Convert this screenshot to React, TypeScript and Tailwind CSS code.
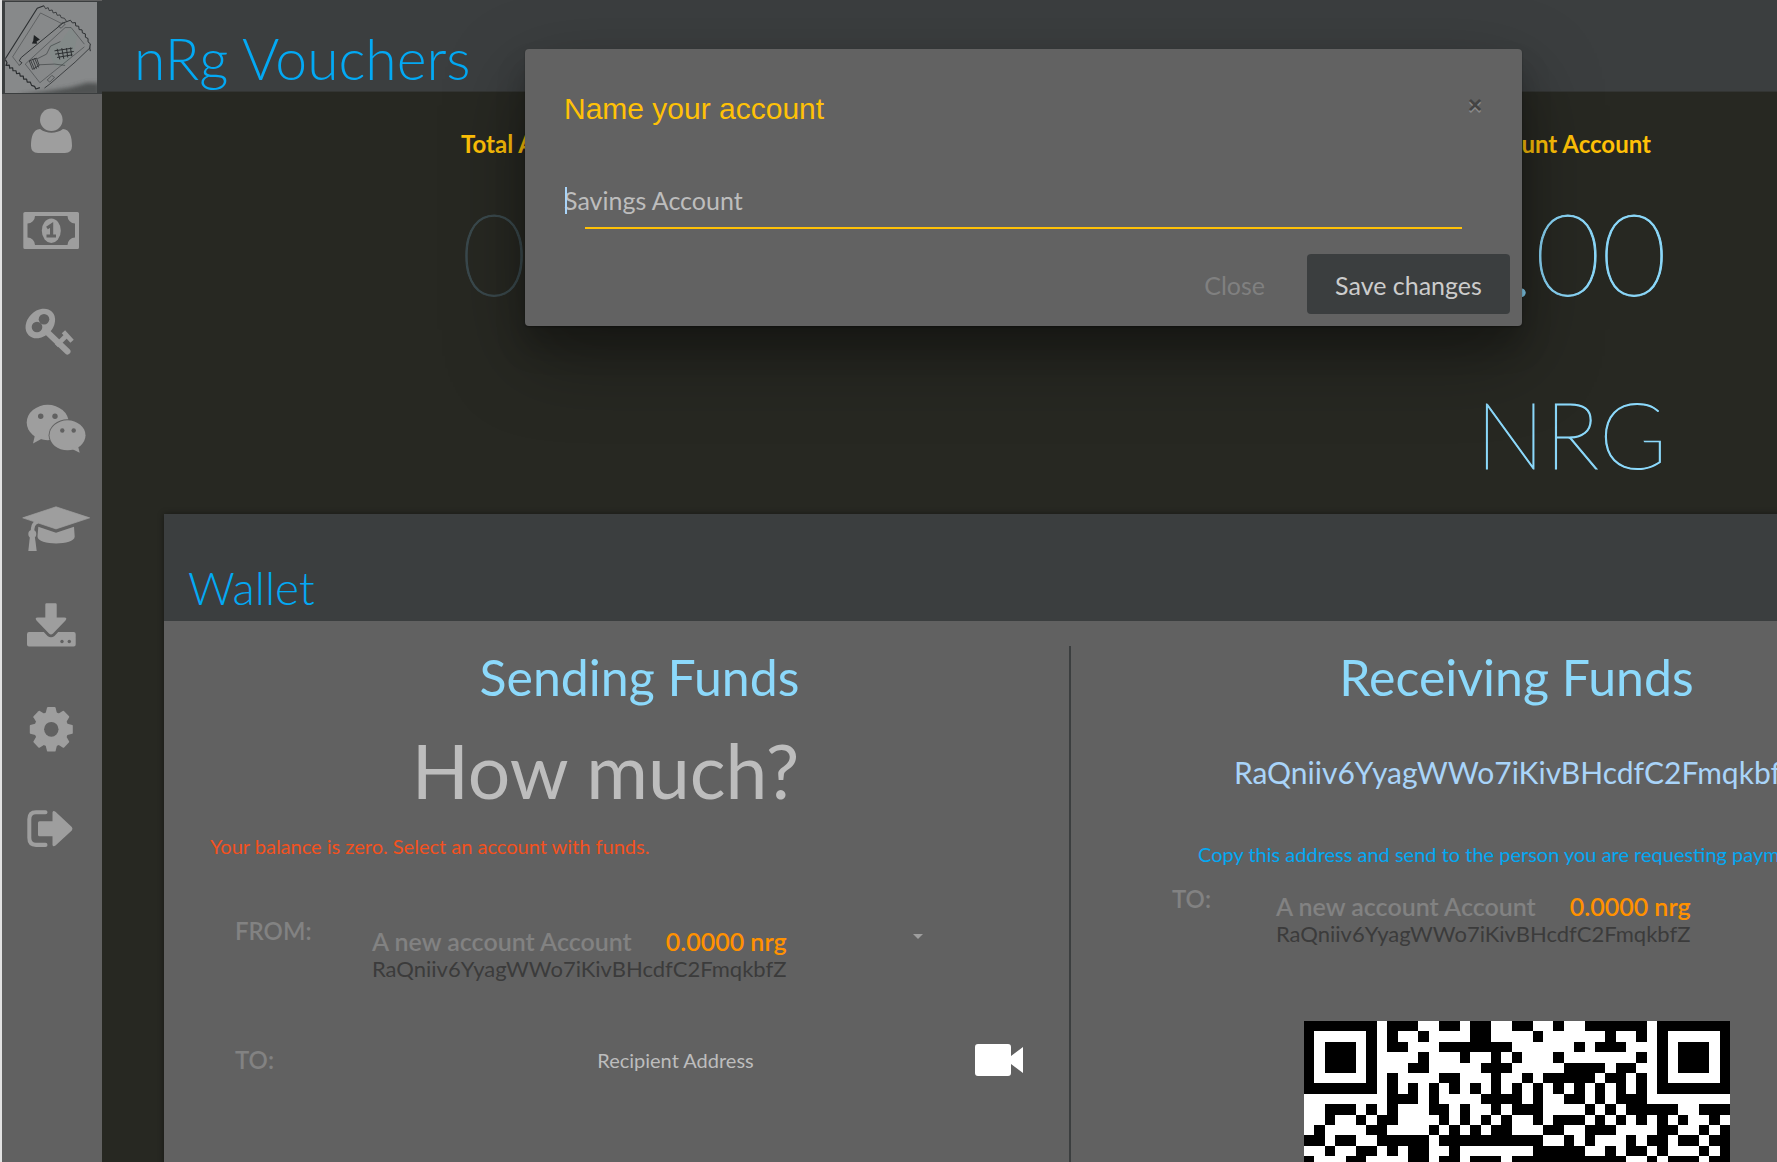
import React from "react";

const ADDRESS = "RaQniiv6YyagWWo7iKivBHcdfC2FmqkbfZ";

const FINDER_FULL = "#######";
const FINDER_RING = "#.....#";
const FINDER_CORE = "#.###.#";

/* Dark spans [start, end) between the two finder patterns or across the row. */
const QR_ROWS: { finder?: string; dark: [number, number][] }[] = [
  { finder: FINDER_FULL, dark: [[8, 11], [13, 15], [16, 18], [20, 22], [24, 25], [27, 33]] },
  { finder: FINDER_RING, dark: [[8, 9], [11, 12], [16, 18], [22, 23], [29, 30], [32, 33]] },
  { finder: FINDER_CORE, dark: [[8, 10], [13, 20], [26, 27], [28, 31]] },
  { finder: FINDER_CORE, dark: [[11, 12], [15, 16], [18, 19], [20, 21], [24, 25], [32, 33]] },
  { finder: FINDER_CORE, dark: [[10, 12], [17, 20], [25, 29], [30, 32]] },
  { finder: FINDER_RING, dark: [[8, 9], [13, 15], [18, 19], [21, 22], [23, 28], [29, 31], [32, 33]] },
  { finder: FINDER_FULL, dark: [[8, 9], [10, 11], [12, 13], [14, 15], [16, 17], [18, 19], [20, 21], [22, 23], [24, 25], [26, 27], [28, 29], [30, 31], [32, 33]] },
  { dark: [[8, 11], [12, 13], [17, 21], [22, 23], [25, 27], [28, 29], [30, 33]] },
  { dark: [[2, 5], [6, 7], [8, 9], [12, 14], [15, 16], [18, 19], [20, 23], [27, 28], [29, 30], [31, 36], [38, 41]] },
  { dark: [[2, 3], [5, 6], [7, 9], [13, 14], [15, 16], [17, 18], [19, 20], [22, 23], [24, 27], [28, 29], [30, 31], [32, 33], [34, 35], [36, 37], [39, 40]] },
  { dark: [[1, 2], [6, 8], [12, 13], [14, 15], [16, 17], [18, 20], [23, 25], [27, 30], [34, 36], [38, 39], [40, 41]] },
  { dark: [[0, 2], [3, 5], [7, 12], [13, 23], [25, 26], [27, 28], [31, 32], [33, 35], [36, 38], [39, 41]] },
  { dark: [[2, 3], [5, 7], [8, 9], [10, 12], [14, 15], [22, 27], [29, 30], [31, 33], [34, 35], [38, 39], [40, 41]] },
  { dark: [[0, 1], [4, 6], [10, 12], [13, 15], [16, 19], [20, 31], [33, 34], [35, 38], [39, 41]] },
];

function QrCode() {
  const cells: React.ReactElement[] = [];
  const put = (x: number, y: number, w: number) =>
    cells.push(<rect key={`${x}-${y}`} x={x} y={y} width={w} height={1} />);
  QR_ROWS.forEach((row, y) => {
    row.dark.forEach(([a, b]) => put(a, y, b - a));
    if (row.finder) {
      [...row.finder].forEach((c, i) => {
        if (c === "#") {
          put(i, y, 1);
          put(34 + i, y, 1);
        }
      });
    }
  });
  return (
    <svg viewBox="0 0 41 14" shapeRendering="crispEdges" className="block w-[426px] bg-white" role="img" aria-label="Address QR code">
      {cells}
    </svg>
  );
}

function Logo() {
  return (
    <svg viewBox="15 6 277 272" className="block h-[91px] w-[92px] bg-[#87898a]" aria-hidden="true">
      <defs>
        <filter id="smudge" x="-20%" y="-50%" width="140%" height="200%">
          <feGaussianBlur stdDeviation="7" />
        </filter>
      </defs>
      <path d="M60 284 L150 272 L215 262 L262 248 L300 250 V290 H60Z" fill="#3c4040" opacity=".75" filter="url(#smudge)" />
      <path d="M150 160 L152 132 L182 126 L214 80 L232 110 L222 160 L196 196 L165 200Z" fill="#7d8b87" opacity=".4" />
      <g fill="none" stroke="#2c2f31" strokeWidth="2.400" strokeLinejoin="round">
        <path d="M132 16 L112 24 L16 176" strokeWidth="3.400" />
        <path d="M132 16 l5 9 l8 -3 l3 9 l9 -2 l3 9 l9 -2 l3 9 l9 -1 l3 8 l10 2 l6 9" />
        <path d="M16 178 l5 10 l-3 8 l10 -1 l1 9 l9 -1 l1 9 l9 0 l2 9 l9 -2 l2 9 l9 0 l1 9 l9 0 l2 9 l9 0 l4 10 l9 3 l4 8 l12 -4" strokeWidth="3.600" />
        <path d="M122 38 L38 170 L58 196 M122 38 L186 70" strokeWidth="1.300" />
        <path d="M58 196 l8 -8 l-8 -6 l6 -10 L190 68 L212 60" strokeWidth="2.800" />
        <path d="M212 60 l6 8 l9 -1 l1 10 l9 1 l1 10 l9 1 l1 9 l9 3 l0 10 l8 4 l0 10 l7 6 l-2 12 l2 10" strokeWidth="3" />
        <path d="M272 142 L226 186 L150 252 L134 264" />
        <path d="M76 192 L196 82 L214 82 L254 132 M76 192 L120 248 L254 140" strokeWidth="1.400" />
        <path d="M176 78 l12 -12 l8 6 l-12 12Z M142 240 l14 -14 l8 6 l-14 14Z" strokeWidth="1.600" />
        <path d="M92 180 l12 28 M98 176 l12 30 M104 174 l12 28 M88 182 l22 -8 l8 22 l-20 12Z" strokeWidth="2.400" />
        <path d="M112 176 L140 162 L152 138 L182 124 M118 194 L164 192 L196 196" strokeWidth="1.600" />
        <path d="M164 152 L218 144 M166 162 L222 154 M172 172 L218 164 M172 146 L180 178 M186 144 L192 176 M200 144 L204 172 M212 142 L216 168" strokeWidth="3" />
      </g>
      <path d="M102 104 L120 118 L110 124 L112 131 L96 130 L100 122Z" fill="#1f2224" />
    </svg>
  );
}

const BG = "#616161";

const NAV: { label: string; art: React.ReactElement }[] = [
  {
    label: "Profile",
    art: (
      <>
        <circle cx="49.3" cy="25.7" r="11.3" />
        <path d="M38 35 C31 35.3 29 43 29 52 Q29 59 36 59 H63 Q70 59 70 52 C70 43 68 35.3 61 35 C54 40 45 40 38 35Z" />
      </>
    ),
  },
  {
    label: "Money",
    art: (
      <>
        <path fillRule="evenodd" d="M23 20 H75.500 Q77 20 77 21.500 V55.500 Q77 57 75.500 57 H23 Q21.300 57 21.300 55.500 V21.500 Q21.300 20 23 20Z M33 24 A7.500 7.500 0 0 1 25.500 31.500 V45.500 A7.500 7.500 0 0 1 33 53 H65.500 A7.500 7.500 0 0 1 73 45.500 V31.500 A7.500 7.500 0 0 1 65.500 24Z" />
        <ellipse cx="49.300" cy="38.700" rx="9.500" ry="12.200" />
        <path d="M44.500 44 H54 M49.600 44 V33 L45 36" fill="none" stroke={BG} strokeWidth="3.200" />
      </>
    ),
  },
  {
    label: "Keys",
    art: (
      <>
        <ellipse cx="38.300" cy="33.500" rx="16.500" ry="12.800" transform="rotate(-45 38.3 33.5)" />
        <path d="M43 40 L65.500 61.500" stroke="#9e9e9e" strokeWidth="6" strokeLinecap="round" />
        <path d="M56 54 L64 46 M63 43.500 L68.500 49.500" stroke="#9e9e9e" strokeWidth="4.600" strokeLinecap="square" fill="none" />
        <circle cx="42" cy="29.300" r="5.300" fill={BG} />
        <circle cx="35" cy="37" r="5.300" fill={BG} />
      </>
    ),
  },
  {
    label: "Chat",
    art: (
      <>
        <ellipse cx="45.700" cy="34.500" rx="21" ry="17.700" />
        <path d="M33 47 L31 55.500 L41 50Z" />
        <ellipse cx="65.500" cy="47.300" rx="18.900" ry="16" fill={BG} />
        <ellipse cx="65.500" cy="47.300" rx="18" ry="15" />
        <path d="M70 61 L77.700 64.800 L76 58Z" />
        <g fill={BG}>
          <circle cx="38.700" cy="28.300" r="2.700" />
          <circle cx="53" cy="28.300" r="2.700" />
          <circle cx="60.300" cy="42.500" r="2.200" />
          <circle cx="71.700" cy="42.500" r="2.200" />
        </g>
      </>
    ),
  },
  {
    label: "Learn",
    art: (
      <g transform="matrix(1 0 0 1.033 0 5)">
        <path d="M20.700 26 L54 15.300 L87.700 26 L54 36.700Z" strokeWidth="0.700" stroke="#9e9e9e" strokeLinejoin="round" />
        <path d="M36.300 34.700 L54 40.300 L72 34.700 L72.700 44 C72.700 53 35.500 53 35.500 44Z" />
        <path d="M36 29.500 C31 31 30.500 35 30.300 41" fill="none" stroke="#9e9e9e" strokeWidth="3.600" />
        <circle cx="30.300" cy="41.700" r="4" />
        <path d="M28 43 H32.700 L34.700 58 H26.300Z" />
      </g>
    ),
  },
  {
    label: "Download",
    art: (
      <g transform="matrix(1 0 0 1.033 0 8.500)">
        <path d="M44.500 10.300 H53.500 Q54.700 10.300 54.700 11.500 V24.300 H62.500 Q65.500 24.600 63.500 27 L51 39.800 Q49 41.500 47 39.800 L34.500 27 Q32.500 24.600 35.500 24.300 H43.300 V11.500 Q43.300 10.300 44.500 10.300Z" />
        <path d="M27 38.300 H41.800 L45.500 42 Q49 44.800 52.500 42 L56.200 38.300 H71.700 Q73.700 38.300 73.700 40.300 V50.300 Q73.700 52.300 71.700 52.300 H27 Q25 52.300 25 50.300 V40.300 Q25 38.300 27 38.300Z" />
        <circle cx="60" cy="47.500" r="1.700" fill={BG} />
        <circle cx="67.300" cy="47.500" r="1.700" fill={BG} />
      </g>
    ),
  },
  {
    label: "Settings",
    art: (
      <g transform="matrix(1 0 0 1.033 0 12)">
        <circle cx="49.300" cy="34.200" r="17" />
        {[0, 45, 90, 135, 180, 225, 270, 315].map((a) => (
          <path
            key={a}
            transform={`rotate(${a} 49.3 34.2)`}
            d="M43.300 20 L45 13.200 Q45.200 12.700 46 12.700 H52.600 Q53.400 12.700 53.600 13.200 L55.300 20Z"
          />
        ))}
        <circle cx="49.300" cy="34.200" r="7.200" fill={BG} />
      </g>
    ),
  },
  {
    label: "Sign out",
    art: (
      <g transform="matrix(1 0 0 1.033 0 15)">
        <path d="M43.500 16.700 H34 Q27.300 16.700 27.300 23.500 V41.500 Q27.300 48.300 34 48.300 H43.500" fill="none" stroke="#9e9e9e" strokeWidth="4" strokeLinecap="round" />
        <path d="M37.500 25.300 H50.500 V17 Q51 14.700 53.500 16.200 L69.800 31 Q71.200 32.700 69.800 34.400 L53.500 49 Q51 50.500 50.500 48.300 V40 H37.500 Q36 40 36 38.500 V26.800 Q36 25.300 37.500 25.300Z" />
      </g>
    ),
  },
];

function Sidebar() {
  return (
    <aside className="flex w-[102px] shrink-0 flex-col border-l-2 border-[#e3e3e3] bg-[#616161]">
      <a href="#home" aria-label="Home" className="mt-px block border-t border-[#3b3e3f] bg-[#3b3e3f] pl-[3px] pb-px">
        <Logo />
      </a>
      <nav className="flex flex-col">
        {NAV.map((item) => (
          <a key={item.label} href="#nav" aria-label={item.label} className="block">
            <svg viewBox="0 0 100 98" className="block h-[98px] w-[100px] fill-[#9e9e9e]" aria-hidden="true">
              {item.art}
            </svg>
          </a>
        ))}
      </nav>
    </aside>
  );
}

function Account() {
  return (
    <div className="whitespace-nowrap">
      <p className="flex gap-[34px] text-[25px] leading-8 font-semibold">
        <span className="text-[#828282]">A new account Account</span>
        <span className="text-[#ff9100]">0.0000 nrg</span>
      </p>
      <p className="text-[22px] leading-6 text-[#3b3b3b]">{ADDRESS}</p>
    </div>
  );
}

function Stats() {
  return (
    <section className="flex h-[422px] shrink-0 justify-between pr-[110px] pl-[359px] whitespace-nowrap">
      <div className="pt-[34px]">
        <h2 className="text-2xl leading-9 font-bold text-[#ffc107]">Total Assets</h2>
        <p className="mt-[22px] text-[114px] leading-[136px] font-extralight text-[#3b4a4e] [-webkit-text-stroke:1px_#3b4a4e]">0.00</p>
      </div>
      <div className="pt-[34px] text-right">
        <h2 className="pr-4 text-2xl leading-9 font-bold text-[#ffc107]">A new account Account</h2>
        <p className="mt-[22px] text-[114px] leading-[136px] font-extralight text-[#8cd9fb] [-webkit-text-stroke:1px_#8cd9fb]">0.00</p>
        <p className="mt-[58px] text-[92px] leading-[112px] font-extralight text-[#8cd9fb] [-webkit-text-stroke:1px_#8cd9fb]">NRG</p>
      </div>
    </section>
  );
}

function Sending() {
  return (
    <section className="border-r-2 border-[#3b3e3f]">
      <h3 className="pl-[46px] text-center text-[50px] leading-[62px] text-[#8cd9fb]">Sending Funds</h3>
      <input
        aria-label="Amount"
        placeholder="How much?"
        className="mt-4 block h-[92px] w-full bg-transparent pr-[22px] text-center text-[75px] text-white outline-none placeholder:text-[#bdbdbd] placeholder:opacity-100"
      />
      <p className="mt-4 pl-[46px] text-xl leading-7 text-[#f4511e]">Your balance is zero. Select an account with funds.</p>
      <div className="mt-[51px] flex pl-[71px]">
        <span className="w-[137px] pt-1 text-2xl leading-8 font-semibold text-[#828282]">FROM:</span>
        <button type="button" className="flex w-[551px] items-start justify-between pt-[14px] text-left">
          <Account />
          <span className="mt-[9px] border-x-[5px] border-t-[5px] border-x-transparent border-t-[#9e9e9e]" />
        </button>
      </div>
      <div className="mt-[55px] flex items-center pl-[71px]">
        <label htmlFor="recipient" className="w-[137px] text-2xl leading-8 font-semibold text-[#828282]">TO:</label>
        <input
          id="recipient"
          placeholder="Recipient Address"
          className="h-12 w-[603px] bg-transparent pl-1 text-center text-xl text-white outline-none placeholder:text-[#bdbdbd] placeholder:opacity-100"
        />
        <button type="button" aria-label="Scan code">
          <svg viewBox="0 0 48 32" className="block h-8 w-12 fill-white" aria-hidden="true">
            <path d="M3 0 H33 Q36 0 36 3 V12 L48 3 V29 L36 20 V29 Q36 32 33 32 H3 Q0 32 0 29 V3 Q0 0 3 0Z" />
          </svg>
        </button>
      </div>
    </section>
  );
}

function Receiving() {
  return (
    <section className="flex flex-col items-center pr-4 whitespace-nowrap">
      <h3 className="text-[50px] leading-[62px] text-[#8cd9fb]">Receiving Funds</h3>
      <p className="mt-9 text-[30px] leading-[56px] text-[#a9d4f9]">{ADDRESS}</p>
      <p className="mt-10 self-start pl-[127px] text-xl leading-7 text-[#03a9f4]">
        Copy this address and send to the person you are requesting payment.
      </p>
      <div className="mt-[15px] flex self-start pl-[101px]">
        <span className="w-[104px] text-2xl leading-8 font-semibold text-[#828282]">TO:</span>
        <div className="pt-[7px]">
          <Account />
        </div>
      </div>
      <div className="mt-[75px]">
        <QrCode />
      </div>
    </section>
  );
}

function Wallet() {
  return (
    <section className="ml-[62px] flex w-[1814px] flex-1 flex-col bg-[#616161] shadow-[0_0_6px_rgba(0,0,0,0.4)]">
      <h2 className="flex h-[107px] shrink-0 items-end bg-[#3b3e3f] pb-[5px] pl-6 text-[46px] leading-[56px] font-light text-[#03a9f4]">Wallet</h2>
      <div className="mt-[25px] grid flex-1 grid-cols-2">
        <Sending />
        <Receiving />
      </div>
    </section>
  );
}

function Modal() {
  return (
    <div
      role="dialog"
      aria-labelledby="dialog-title"
      className="absolute top-[49px] left-[525px] flex w-[997px] flex-col rounded-sm bg-[#626262] shadow-[0_30px_80px_rgba(0,0,0,0.35),0_20px_30px_rgba(0,0,0,0.2),0_1px_2px_rgba(0,0,0,0.3)]"
    >
      <div className="flex items-start justify-between pt-10 pr-10 pl-[39px]">
        <h2 id="dialog-title" className="font-['Liberation_Sans'] text-[30px] leading-10 text-[#ffc107]">Name your account</h2>
        <button
          type="button"
          aria-label="Dismiss"
          className="font-['Liberation_Sans'] text-2xl leading-8 font-bold text-[#444444] [text-shadow:0_2px_0_#8a8a8a]"
        >
          ×
        </button>
      </div>
      <div className="relative mt-11 px-[39px]">
        <input
          aria-label="Account name"
          placeholder="Savings Account"
          className="block h-[54px] w-full bg-transparent text-[25px] text-white outline-none placeholder:text-[#bdbdbd] placeholder:opacity-100"
        />
        <span className="absolute top-[14px] left-10 h-[27px] w-[2px] bg-[#a9d4f9]" />
      </div>
      <div className="mx-[60px] h-[2px] bg-[#ffc107]" />
      <div className="mt-[25px] flex items-stretch justify-end gap-[42px] pr-3 pb-3">
        <button type="button" className="pt-1 text-[25px] text-[#808080]">Close</button>
        <button type="button" className="h-[60px] w-[203px] rounded-sm bg-[#3b3e3f] pt-1 text-[25px] text-[#cccccc]">Save changes</button>
      </div>
    </div>
  );
}

export default function App() {
  return (
    <div className="relative flex h-screen overflow-hidden bg-[#272822] font-['Lato',sans-serif]">
      <Sidebar />
      <div className="flex min-w-0 flex-1 flex-col overflow-hidden">
        <header className="flex h-[92px] shrink-0 items-center border-b border-[#333533] bg-[#3b3e3f] pt-6 pl-8">
          <h1 className="text-[57px] leading-[64px] font-light text-[#03a9f4]">nRg Vouchers</h1>
        </header>
        <Stats />
        <Wallet />
      </div>
      <Modal />
    </div>
  );
}
